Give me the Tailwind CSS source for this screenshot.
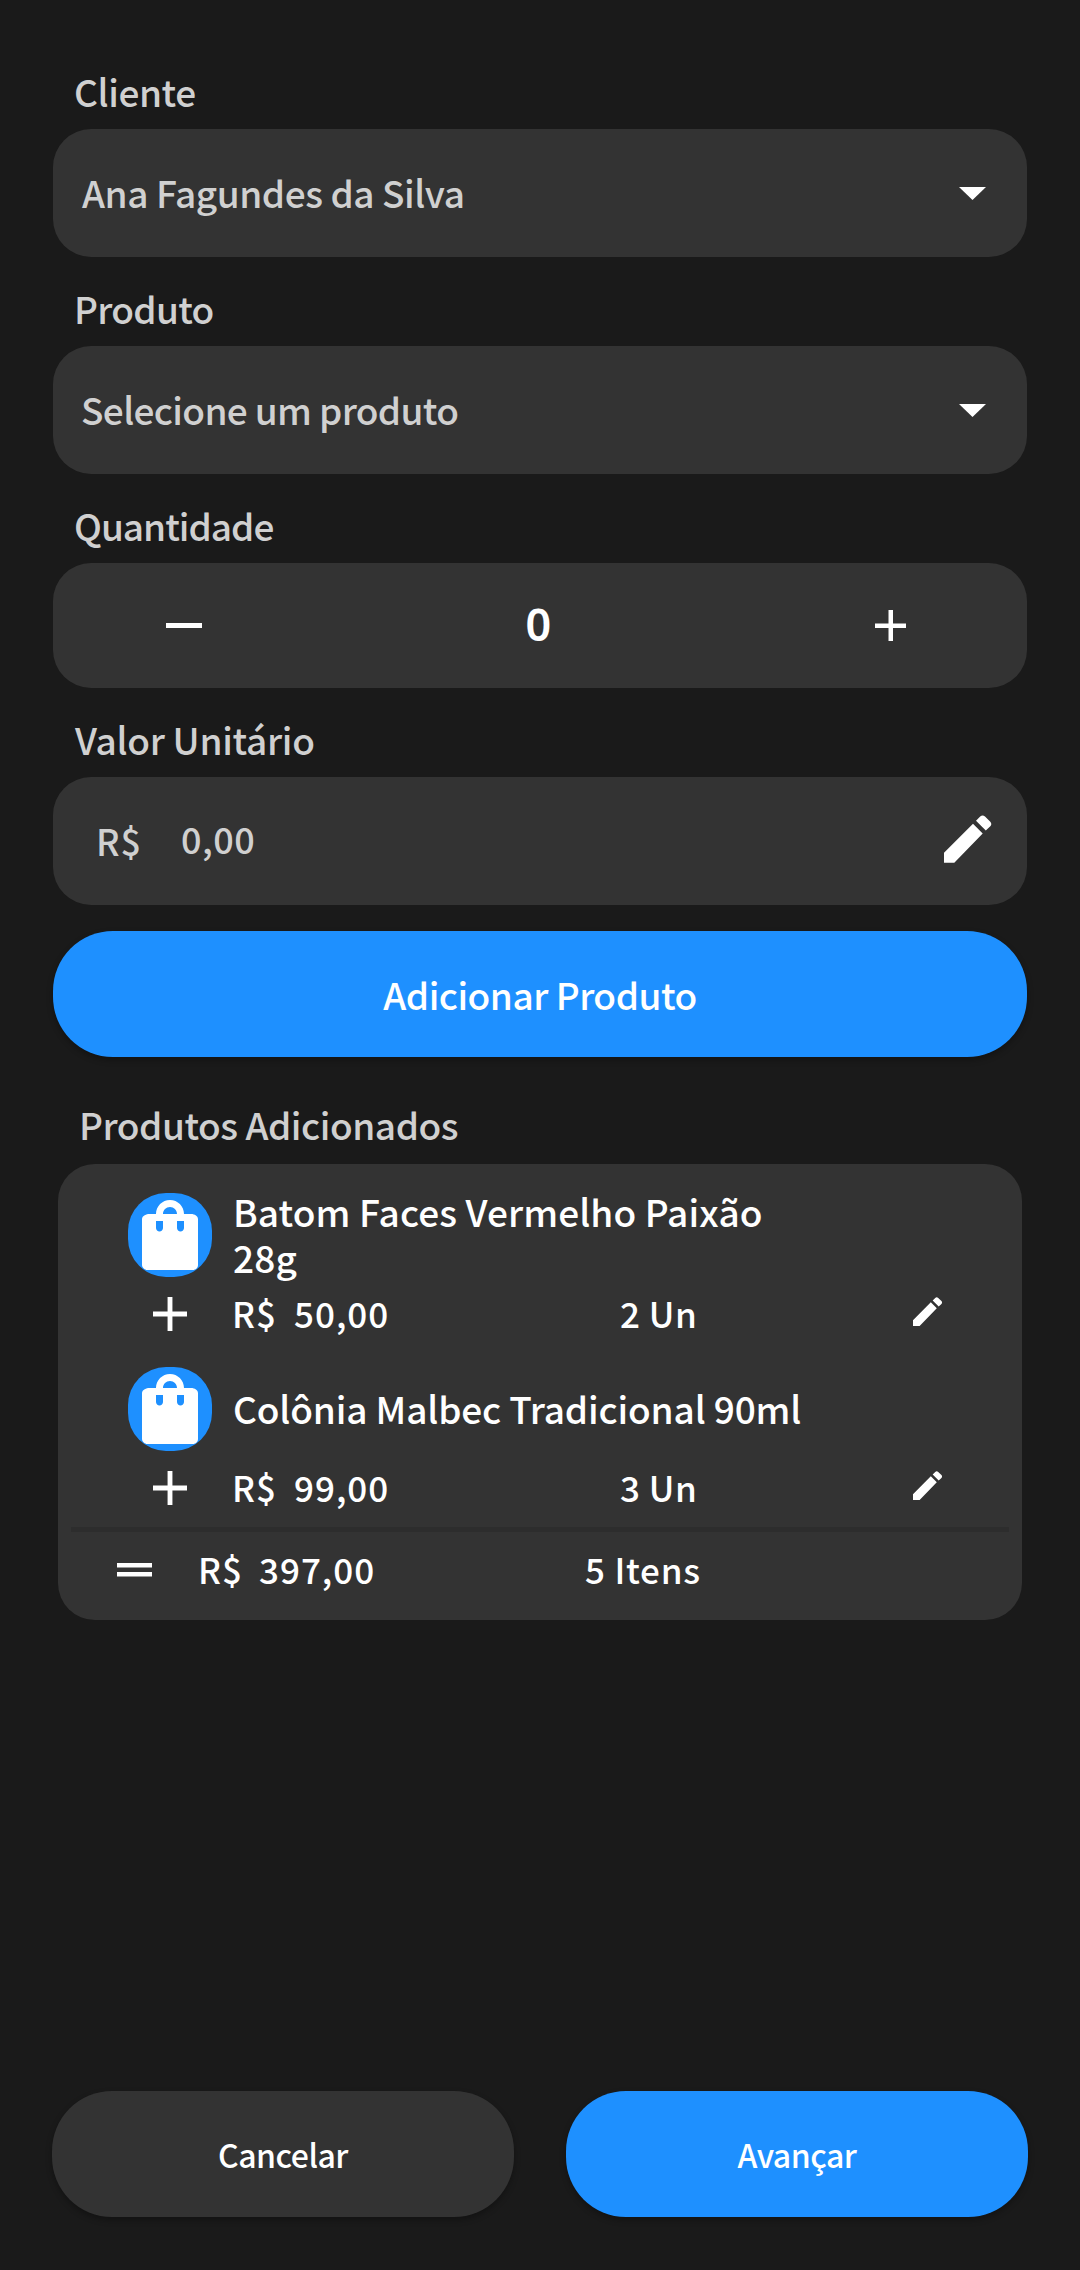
<!DOCTYPE html>
<html lang="pt-BR">
<head>
<meta charset="utf-8">
<title>Novo pedido</title>
<script src="https://cdn.jsdelivr.net/npm/@tailwindcss/browser@4"></script>
</head>
<body class="bg-[#1a1a1a]">
<svg class="hidden">
  <symbol id="bag" viewBox="0 0 24 24"><path d="M18 6h-2c0-2.21-1.79-4-4-4S8 3.79 8 6H6c-.6 0-2 .4-2 1.5v13c0 .9.9 1.5 1.5 1.5h13c.9 0 1.5-.6 1.5-1.5v-13C20 6.6 19.1 6 18 6zm-8 4c0 .55-.45 1-1 1s-1-.45-1-1V8h2v2zm2-6c1.1 0 2 .9 2 2h-4c0-1.1.9-2 2-2zm4 6c0 .55-.45 1-1 1s-1-.45-1-1V8h2v2z"/></symbol>
  <symbol id="plus" viewBox="0 0 14 14"><path d="M14 8H8v6H6V8H0V6h6V0h2v6h6z"/></symbol>
  <symbol id="pencil" viewBox="0 0 48 48"><path d="M0 37.7 29 8.7l9.7 9.7L10.3 47.7H0zM32 5.7l4.2-4.2q2.4-2 4.8 0l5.3 5.2q2 2.4 0 4.6l-4.5 4.2z"/></symbol>
</svg>
<main class="flex h-[2270px] w-[1080px] flex-col px-[53px] pt-[67px] font-['Noto_Sans_CJK_JP','Noto_Sans',sans-serif] text-[37px] leading-[48px] font-medium whitespace-pre text-[#d0d0d0]">
  <label class="pl-[21px] tracking-[-0.4px]">Cliente</label>
  <div class="mt-[14px] flex h-32 items-center justify-between rounded-[38px] bg-[#333] pr-[41px] pl-[29px]">
    <span class="-mt-[3px] tracking-[-0.45px]">Ana Fagundes da Silva</span>
    <svg class="h-[13px] w-[27px] fill-white" viewBox="0 0 27 13"><path d="M0 0h27L13.5 13z"/></svg>
  </div>
  <label class="mt-[27px] pl-[21px] tracking-[-0.7px]">Produto</label>
  <div class="mt-[14px] flex h-32 items-center justify-between rounded-[38px] bg-[#333] pr-[41px] pl-[28px]">
    <span class="-mt-[3px] tracking-[-0.65px]">Selecione um produto</span>
    <svg class="h-[13px] w-[27px] fill-white" viewBox="0 0 27 13"><path d="M0 0h27L13.5 13z"/></svg>
  </div>
  <label class="mt-[27px] pl-[21px] tracking-[-1px]">Quantidade</label>
  <div class="mt-[14px] flex h-[125px] items-center justify-between rounded-[38px] bg-[#333] pr-[121px] pl-[113px] text-white">
    <svg class="h-[5px] w-9 fill-white" viewBox="0 0 36 5"><path d="M0 0h36v5H0z"/></svg>
    <span class="-mt-1 font-['Noto_Sans'] text-[45px] font-semibold">0</span>
    <svg class="size-[31.5px] fill-white"><use href="#plus"/></svg>
  </div>
  <label class="mt-[27px] pl-[22px] tracking-[-0.3px]">Valor Unitário</label>
  <div class="mt-[14px] flex h-32 items-center rounded-[38px] bg-[#333] pr-[35px] pl-[43px]">
    <span class="-mt-[3px] w-[85px] text-[36px] tracking-[1px]">R$</span>
    <span class="-mt-[6px] text-[36px] tracking-[0.5px]">0,00</span>
    <svg class="-mt-1 ml-auto size-12 fill-white"><use href="#pencil"/></svg>
  </div>
  <button class="mt-[26px] h-[126px] rounded-[60px] bg-[#1e90ff] pb-px tracking-[-0.5px] text-white shadow-[0_3px_6px_rgba(0,0,0,0.3)]">Adicionar Produto</button>
  <h2 class="mt-[43px] pl-[26px] tracking-[-0.45px]">Produtos Adicionados</h2>

  <section class="mx-[5px] mt-4 flex h-[456px] flex-col rounded-[37px] bg-[#333] pt-[29px] text-white">
    <div class="flex h-[84px] items-center gap-[21px] pl-[70px]">
      <span class="size-[84px] overflow-hidden rounded-[38px] bg-[#1e90ff]"><svg class="size-[84px] fill-white"><use href="#bag"/></svg></span>
      <span class="-mt-0.5 w-[620px] leading-[46px] whitespace-normal tracking-[0.1px]">Batom Faces Vermelho Paixão<br>28g</span>
    </div>
    <div class="grid h-[74px] grid-cols-[104px_62px_326px_293px_30px] items-center pl-[70px] text-[35px]">
      <svg class="ml-[25px] size-[34px] fill-white"><use href="#plus"/></svg>
      <span class="-mt-[3px] tracking-[1px]">R$</span><span class="-mt-[3px] tracking-[1px]">50,00</span><span class="-mt-[3px] tracking-[0.5px]">2 Un</span>
      <svg class="-mt-[5px] size-[29.5px] fill-white"><use href="#pencil"/></svg>
    </div>
    <div class="mt-4 flex h-[84px] items-center gap-[21px] pl-[70px]">
      <span class="size-[84px] overflow-hidden rounded-[38px] bg-[#1e90ff]"><svg class="size-[84px] fill-white"><use href="#bag"/></svg></span>
      <span class="-mt-0.5 tracking-[-0.15px]">Colônia Malbec Tradicional 90ml</span>
    </div>
    <div class="grid h-[74px] grid-cols-[104px_62px_326px_293px_30px] items-center pl-[70px] text-[35px]">
      <svg class="ml-[25px] size-[34px] fill-white"><use href="#plus"/></svg>
      <span class="-mt-[3px] tracking-[1px]">R$</span><span class="-mt-[3px] tracking-[1px]">99,00</span><span class="-mt-[3px] tracking-[0.5px]">3 Un</span>
      <svg class="-mt-[5px] size-[29.5px] fill-white"><use href="#pencil"/></svg>
    </div>
    <div class="mx-[13px] mt-0.5 h-[5px] bg-[#2d2d2d]"></div>
    <div class="grid h-[76px] grid-cols-[81px_61px_326px_200px] items-center pl-[59px] text-[35px]">
      <svg class="h-[14px] w-[35px] fill-white" viewBox="0 0 35 14"><path d="M0 0h35v4.5H0zM0 9h35v4.5H0z"/></svg>
      <span class="-mt-[3px] tracking-[1px]">R$</span><span class="-mt-[3px] tracking-[1px]">397,00</span><span class="-mt-[3px] tracking-[0.8px]">5 Itens</span>
    </div>
  </section>

  <footer class="-mx-px mt-auto mb-[53px] flex gap-[52px] text-[32px] tracking-[-0.5px] text-white">
    <button class="h-[126px] flex-1 rounded-[60px] bg-[#333] pb-px shadow-[0_3px_6px_rgba(0,0,0,0.3)]">Cancelar</button>
    <button class="h-[126px] flex-1 rounded-[60px] bg-[#1e90ff] pb-px shadow-[0_3px_6px_rgba(0,0,0,0.3)]">Avançar</button>
  </footer>
</main>
</body>
</html>
